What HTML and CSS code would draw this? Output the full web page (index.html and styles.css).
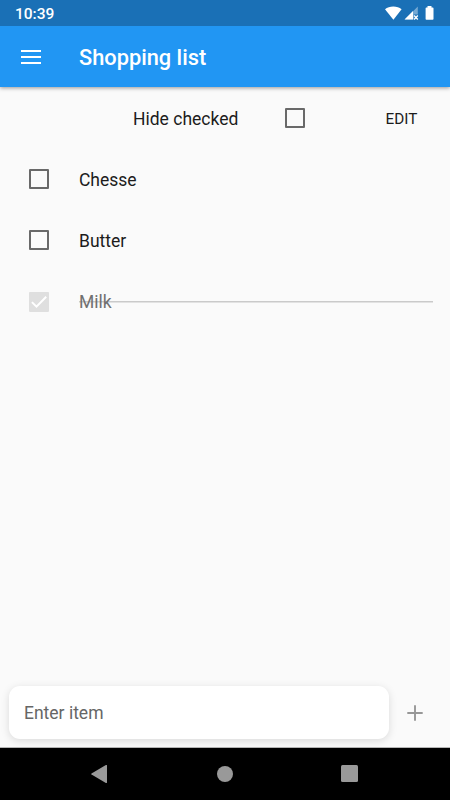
FILE: index.html
```html
<!DOCTYPE html>
<html lang="en">
<head>
<meta charset="utf-8">
<title>Shopping list</title>
<link rel="stylesheet" href="styles.css">
</head>
<body>
<div class="screen">
  <header class="top">
    <div class="status">
      <span class="clock">10:39</span>
      <svg class="status-icons" width="52" height="16" viewBox="0 0 52 16">
        <path d="M1 4.300C3.200 2.500 6 1.600 9.300 1.600s6.100.9 8.300 2.700L9.400 14.700z" fill="#fff"/>
        <path d="M33.800 1.500v8h-4V14.500H20.800z" fill="#fff" fill-opacity=".4"/>
        <path d="M29 6v8.500h-8.500z" fill="#fff"/>
        <path d="M30.100 10.400l3.700 4M33.800 10.400l-3.700 4" stroke="#fff" stroke-width="1.400"/>
        <path d="M43.500 2.500V1h4v1.500h1.200q.8 0 .8.800v10.700q0 .8-.8.800h-6.300q-.8 0-.8-.8V3.300q0-.8.800-.8z" fill="#fff"/>
      </svg>
    </div>
    <div class="appbar">
      <svg class="menu" width="20" height="14" viewBox="0 0 20 14" fill="#fff">
        <path d="M0 0h20v2H0zM0 6h20v2H0zM0 12h20v2H0z"/>
      </svg>
      <h1 class="title">Shopping list</h1>
    </div>
  </header>

  <main class="content">
    <div class="toolbar">
      <span class="toolbar-label">Hide checked</span>
      <span class="box"></span>
      <span class="edit">EDIT</span>
    </div>
    <div class="item"><span class="box"></span><span class="name">Chesse</span></div>
    <div class="item"><span class="box"></span><span class="name">Butter</span></div>
    <div class="item done">
      <svg class="checked" width="20" height="21" viewBox="0 0 20 21">
        <rect y=".9" width="20" height="20" rx=".8" fill="#dfdfdf"/>
        <path d="M2.900 11.100l4.600 4.500L17.200 5.800" fill="none" stroke="#fff" stroke-width="2"/>
      </svg>
      <span class="name">Milk</span>
    </div>
  </main>

  <div class="entry">
    <div class="field">Enter item</div>
    <svg class="add" width="16" height="16" viewBox="0 0 16 16">
      <path d="M8 .3v15.400M.3 8h15.400" stroke="#979797" stroke-width="1.900"/>
    </svg>
  </div>

  <nav class="nav">
    <svg width="16" height="18" viewBox="0 0 16 18"><path d="M.5 8.400Q0 9 .5 9.600L14.900 17.900q1.100.5 1.100-.6V.7q0-1.100-1.100-.6z" fill="#999"/></svg>
    <span class="home"></span>
    <span class="recent"></span>
  </nav>
</div>
</body>
</html>
```
FILE: styles.css
```css
* {
  box-sizing: border-box;
}

body {
  margin: 0;
  font-family: Roboto, "Liberation Sans", sans-serif;
  font-size: 17.5px;
  color: #1c1c1c;
}

.screen {
  display: flex;
  flex-direction: column;
  width: 450px;
  height: 800px;
  overflow: hidden;
  background: #fafafa;
}

.top {
  flex: none;
  height: 87px;
  background: #2196f3;
  box-shadow: 0 1px 4px rgba(0, 0, 0, .4);
}

.status {
  display: flex;
  align-items: center;
  justify-content: space-between;
  height: 26px;
  padding: 0 14px 0 15px;
  background: #1a70b6;
  color: #fff;
}

.clock {
  padding-top: 2px;
  font-size: 15.5px;
  font-weight: 500;
  line-height: 20px;
}

.appbar {
  display: flex;
  align-items: center;
  height: 61px;
  padding-left: 20.6px;
}

.title {
  margin: 0 0 0 38.4px;
  padding-top: 2px;
  color: #fff;
  font-size: 21.8px;
  font-weight: 500;
  line-height: 26px;
}

.toolbar {
  display: flex;
  align-items: center;
  height: 61px;
  padding: 1px 0 0 133px;
}

.toolbar-label {
  width: 152px;
  padding-top: 1px;
}

.box {
  flex: none;
  width: 20px;
  height: 20px;
  border: 2px solid #696969;
  border-radius: 1px;
}

.edit {
  margin-left: 80.5px;
  padding-top: 1px;
  font-size: 15.3px;
}

.item {
  display: flex;
  align-items: center;
  height: 61.2px;
  padding: 1px 17px 0 29.4px;
}

.item .name {
  flex: 1;
  margin-left: 29.6px;
  padding-top: 1px;
}

.done .name {
  color: #707070;
  background: linear-gradient(#cacaca, #cacaca) 0 50% / 100% 1.5px no-repeat;
}

.entry {
  display: flex;
  align-items: center;
  height: 62px;
  margin-top: auto;
  padding: 0 27px 8px 9px;
  border-bottom: 1px solid #b5b5b5;
}

.field {
  width: 380px;
  height: 53px;
  padding-left: 15px;
  border-radius: 11px;
  background: #fff;
  box-shadow: 0 2px 8px rgba(0, 0, 0, .13);
  color: #666;
  line-height: 54px;
}

.add {
  margin-left: 18px;
}

.nav {
  display: flex;
  align-items: center;
  justify-content: space-between;
  height: 52px;
  padding: 0 92.5px 1px 91px;
  background: #000;
}

.home {
  width: 16px;
  height: 16px;
  margin-left: 2px;
  border-radius: 50%;
  background: #999;
}

.recent {
  width: 17px;
  height: 17px;
  border-radius: 1.5px;
  background: #999;
}
```
